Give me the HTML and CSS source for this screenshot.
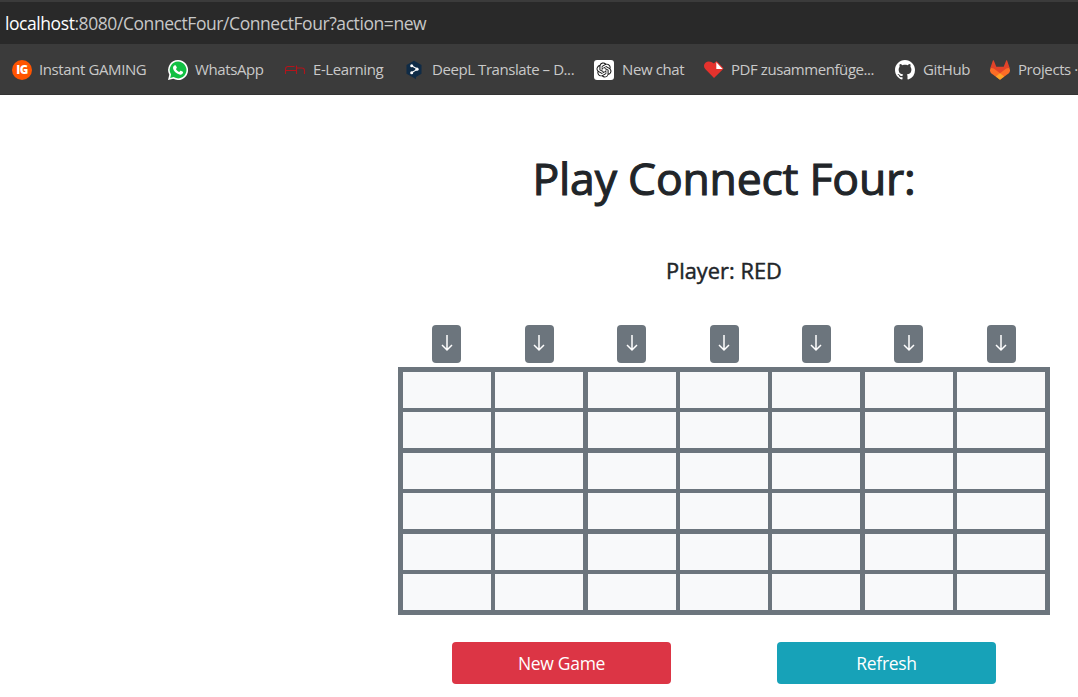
FILE: index.html
```
<!DOCTYPE html>
<html lang="en">
<head>
<meta charset="utf-8">
<title>Connect Four</title>
<link rel="stylesheet" href="styles.css">
</head>
<body>
<header class="browser">
  <div class="address"><span class="url"><b class="host">localhost</b>:8080/ConnectFour/ConnectFour?action=new</span></div>
  <nav class="bookmarks">
    <a class="bm bm-ig"><span class="ig">IG</span><span class="label">Instant GAMING</span></a>
    <a class="bm bm-wa"><svg class="icon" viewBox="0 0 20 20"><path fill="#fff" d="M10 0a10 10 0 1 1-4.7 18.8L0 20l1.300-5.200A10 10 0 0 1 10 0z"/><path fill="#12c043" d="M10 1.600a8.400 8.400 0 1 1-4.400 15.500l-3.400.8.9-3.300A8.400 8.400 0 0 1 10 1.600z"/><path fill="#fff" d="M6.700 5.200h.7c.3 0 .5.200.6.5l.8 1.800c.1.300 0 .5-.2.700l-.7.9c.8 1.500 1.800 2.400 3.400 3l.9-1.100c.2-.2.4-.3.7-.2l1.900.9c.3.100.4.300.3.600-.1 1.600-1.500 2.500-2.900 2.400-3.500-.4-6.900-3.800-7.200-6.600 0-1.200.7-2.600 1.700-2.900z"/></svg><span class="label">WhatsApp</span></a>
    <a class="bm bm-el"><svg class="icon" viewBox="0 0 20 20"><g fill="none" stroke="#b3141b" stroke-width="1.100"><path d="M.5 14V9.500Q.5 6.500 3 6.500h6.500M.5 10.500h8M11.500 5.500V14M11.500 8h5.500Q19.500 8 19.500 10.500V14M8.500 10.500h3"/></g></svg><span class="label">E-Learning</span></a>
    <a class="bm bm-dl"><svg class="icon" viewBox="0 0 20 20"><path fill="#0f2b46" d="M9 .7l7.500 4.300v8.800l-5.500 3.200v2.300L7.900 17.300 1.500 13.800V5z"/><path fill="none" stroke="#fff" stroke-width="1.100" d="M6.500 5.700l6 3.400-6 3.700"/><g fill="#fff"><circle cx="6.700" cy="5.700" r="1.500"/><circle cx="12" cy="9.200" r="1.600"/><circle cx="6.700" cy="12.700" r="1.500"/></g></svg><span class="label">DeepL Translate – D...</span></a>
    <a class="bm bm-ai"><svg class="icon" viewBox="0 0 20 20"><rect width="20" height="20" rx="3" fill="#fff"/><path transform="translate(2.500 2.500) scale(.625)" fill="#111" d="M22.282 9.821a5.985 5.985 0 0 0-.516-4.910 6.046 6.046 0 0 0-6.510-2.900A6.065 6.065 0 0 0 4.981 4.182a5.985 5.985 0 0 0-3.998 2.900 6.046 6.046 0 0 0 .743 7.097 5.980 5.980 0 0 0 .51 4.911 6.051 6.051 0 0 0 6.515 2.900A5.985 5.985 0 0 0 13.260 24a6.056 6.056 0 0 0 5.772-4.206 5.990 5.990 0 0 0 3.998-2.900 6.056 6.056 0 0 0-.748-7.073zM13.260 22.430a4.476 4.476 0 0 1-2.876-1.041l.141-.08 4.779-2.758a.795.795 0 0 0 .393-.682v-6.737l2.020 1.169a.071.071 0 0 1 .038.052v5.583a4.504 4.504 0 0 1-4.495 4.494zM3.600 18.304a4.471 4.471 0 0 1-.535-3.014l.142.085 4.783 2.759a.771.771 0 0 0 .781 0l5.843-3.369v2.332a.08.08 0 0 1-.033.062L9.740 19.950a4.499 4.499 0 0 1-6.140-1.646zM2.341 7.896a4.485 4.485 0 0 1 2.366-1.973V11.600a.766.766 0 0 0 .388.677l5.815 3.354-2.020 1.169a.076.076 0 0 1-.071 0l-4.830-2.787A4.504 4.504 0 0 1 2.341 7.872zm16.597 3.855l-5.833-3.387L15.119 7.200a.076.076 0 0 1 .071 0l4.830 2.791a4.494 4.494 0 0 1-.676 8.105v-5.678a.79.79 0 0 0-.407-.667zm2.010-3.023l-.141-.085-4.774-2.782a.776.776 0 0 0-.785 0L9.409 9.230V6.897a.066.066 0 0 1 .028-.061l4.830-2.787a4.499 4.499 0 0 1 6.681 4.660zM8.307 12.863l-2.020-1.164a.08.08 0 0 1-.038-.057V6.074a4.499 4.499 0 0 1 7.376-3.453l-.142.080L8.704 5.459a.795.795 0 0 0-.393.682zm1.098-2.365l2.602-1.500 2.607 1.500v2.999l-2.597 1.500-2.607-1.500z"/></svg><span class="label">New chat</span></a>
    <a class="bm bm-pdf"><svg class="icon" viewBox="0 0 20 20"><path fill="#e5322d" d="M10 18L1.700 9.600C-.6 7.200-.4 4.300 1.400 2.700 3.800.6 7 1.100 10 3.500c1-1.100 1.700-1.800 2.700-2.200L19 7.800c.5.500.4.900 0 1.400z"/><path fill="#fff" d="M12.300 2.300l6.300 6.600h-6.300z"/></svg><span class="label">PDF zusammenfüge...</span></a>
    <a class="bm bm-gh"><svg class="icon" viewBox="0 0 16 16"><path fill="#fff" d="M8 0C3.580 0 0 3.580 0 8c0 3.540 2.290 6.530 5.470 7.590.4.070.55-.17.55-.38 0-.19-.01-.82-.01-1.490-2.010.37-2.530-.49-2.690-.94-.09-.23-.48-.94-.82-1.130-.28-.15-.68-.52-.01-.53.63-.01 1.080.58 1.230.82.72 1.210 1.870.87 2.330.66.07-.52.28-.87.51-1.070-1.780-.2-3.640-.89-3.640-3.950 0-.87.31-1.590.82-2.150-.08-.2-.36-1.020.08-2.120 0 0 .67-.21 2.200.82.64-.18 1.320-.27 2-.27s1.360.09 2 .27c1.530-1.040 2.200-.82 2.200-.82.44 1.100.16 1.920.08 2.120.51.56.82 1.270.82 2.150 0 3.070-1.870 3.750-3.650 3.950.29.25.54.73.54 1.480 0 1.070-.01 1.930-.01 2.200 0 .21.15.46.55.38A8.010 8.010 0 0 0 16 8c0-4.420-3.580-8-8-8z"/></svg><span class="label">GitHub</span></a>
    <a class="bm bm-gl"><svg class="icon" viewBox="0 0 20 20"><path fill="#fc6d26" d="M.8 7.200L0 10q-.2 2 1.500 3.500L10 19.700l8.500-6.200Q20.200 12 20 10l-.8-2.800z"/><path fill="#e24329" d="M3.700.3l2.600 6.500h7.400L16.300.3q.5-.3.8.2l2.500 7.300q-3.600.4-6 2.600L10 13.200l-3.600-2.800q-2.400-2.200-6-2.600L2.900.5q.3-.5.8-.2z"/><path fill="#fca326" d="M10 13.200l4.200 3.400-4.200 3.100-4.200-3.100z"/></svg><span class="label">Projects ·</span></a>
  </nav>
</header>
<main class="game">
  <h1 class="title"><span>Play Connect Four:</span></h1>
  <h2 class="player"><span>Player: RED</span></h2>
  <div class="drops">
    <button class="drop"><svg class="arrow" viewBox="0 0 12 18"><path d="M6 1v15M1 11l5 5 5-5"/></svg></button>
    <button class="drop"><svg class="arrow" viewBox="0 0 12 18"><path d="M6 1v15M1 11l5 5 5-5"/></svg></button>
    <button class="drop"><svg class="arrow" viewBox="0 0 12 18"><path d="M6 1v15M1 11l5 5 5-5"/></svg></button>
    <button class="drop"><svg class="arrow" viewBox="0 0 12 18"><path d="M6 1v15M1 11l5 5 5-5"/></svg></button>
    <button class="drop"><svg class="arrow" viewBox="0 0 12 18"><path d="M6 1v15M1 11l5 5 5-5"/></svg></button>
    <button class="drop"><svg class="arrow" viewBox="0 0 12 18"><path d="M6 1v15M1 11l5 5 5-5"/></svg></button>
    <button class="drop"><svg class="arrow" viewBox="0 0 12 18"><path d="M6 1v15M1 11l5 5 5-5"/></svg></button>
  </div>
  <div class="board">
    <i></i><i></i><i></i><i></i><i></i><i></i><i></i>
    <i></i><i></i><i></i><i></i><i></i><i></i><i></i>
    <i></i><i></i><i></i><i></i><i></i><i></i><i></i>
    <i></i><i></i><i></i><i></i><i></i><i></i><i></i>
    <i></i><i></i><i></i><i></i><i></i><i></i><i></i>
    <i></i><i></i><i></i><i></i><i></i><i></i><i></i>
  </div>
  <div class="actions">
    <button class="btn btn-new">New Game</button>
    <button class="btn btn-refresh">Refresh</button>
  </div>
</main>
</body>
</html>
```
FILE: styles.css
```
* { box-sizing: border-box; }
body { margin: 0; height: 697px; overflow: hidden; background: #fff; color: #212529; font-family: "Open Sans", "Noto Sans", sans-serif; }
.browser { height: 95px; background: #3b3b3b; padding-top: 2px; overflow: hidden; }
.address { height: 42px; background: #292929; padding-left: 5px; line-height: 43px; font-size: 17.5px; color: #c7c7c7; white-space: nowrap; letter-spacing: -0.43px; }
.host { font-weight: 400; color: #fff; }
.bookmarks { display: flex; height: 51px; padding-left: 12px; align-items: center; border-bottom: 1px solid #333; }
.bm { display: flex; flex: none; align-items: center; gap: 7px; height: 100%; color: #c9c9c9; font-size: 15px; white-space: nowrap; letter-spacing: -0.4px; }
.bm-ig { width: 156px; }
.bm-wa { width: 117px; }
.bm-el { width: 120px; gap: 8px; }
.bm-dl { width: 189px; letter-spacing: -0.43px; }
.bm-ai { width: 110px; gap: 8px; }
.bm-pdf { width: 191px; letter-spacing: -0.43px; }
.bm-gh { width: 95px; gap: 8px; }
.bm-gl { gap: 8px; }
.icon { width: 20px; height: 20px; flex: none; margin-top: 1px; }
.ig { width: 20px; height: 20px; margin-top: 1px; border-radius: 50%; background: #ff5400; color: #fff; font: 800 11.5px/20px "Open Sans", sans-serif; text-align: center; letter-spacing: -0.5px; }
.game { width: 652px; margin-left: 398px; }
.title { margin: 0; padding-top: 48px; height: 142px; line-height: 70px; font-size: 44.5px; font-weight: 400; -webkit-text-stroke: 1.1px #212529; text-align: center; white-space: nowrap; letter-spacing: -0.2px; }
.player { margin: 0; height: 88px; padding-top: 18px; line-height: 32px; font-size: 21.8px; font-weight: 400; -webkit-text-stroke: 0.45px #212529; text-align: center; letter-spacing: 0.03px; }
.drops { display: grid; grid-template-columns: repeat(7, 88px); column-gap: 4.45px; padding-left: 4.7px; height: 42px; justify-items: center; }
.drop { width: 29px; height: 38px; border: 0; border-radius: 4px; padding: 0; background: #6c757d; display: flex; align-items: center; justify-content: center; }
.arrow { width: 12px; height: 18px; margin-top: -2px; fill: none; stroke: #fff; stroke-width: 1.5; }
.board { display: grid; grid-template: repeat(6, 36px) / repeat(7, 88px); gap: 4.4px 4.333px; padding: 5px; height: 248px; background: #6c757d; }
.board i { background: #f8f9fa; }
.actions { display: flex; justify-content: space-between; padding: 27px 54px 0; }
.btn { width: 219px; height: 42px; border: 0; border-radius: 4px; padding: 0; color: #fff; font: 400 17.5px/41px "Open Sans", sans-serif; letter-spacing: -0.3px; }
.btn-new { background: #dc3545; }
.btn-refresh { background: #17a2b8; }
```
